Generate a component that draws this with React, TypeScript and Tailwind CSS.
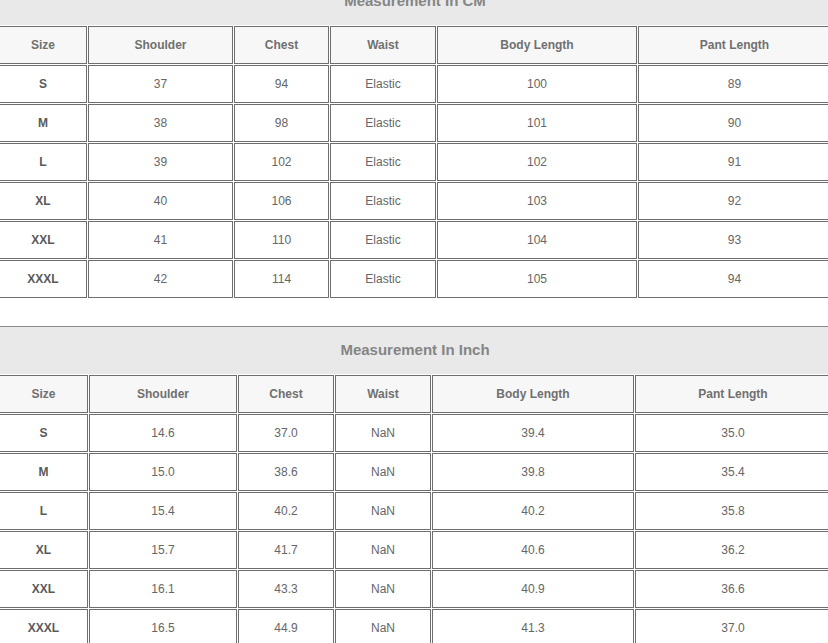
const headers = ["Size", "Shoulder", "Chest", "Waist", "Body Length", "Pant Length"];

const cmRows = [
  ["S", "37", "94", "Elastic", "100", "89"],
  ["M", "38", "98", "Elastic", "101", "90"],
  ["L", "39", "102", "Elastic", "102", "91"],
  ["XL", "40", "106", "Elastic", "103", "92"],
  ["XXL", "41", "110", "Elastic", "104", "93"],
  ["XXXL", "42", "114", "Elastic", "105", "94"],
];

const inchRows = [
  ["S", "14.6", "37.0", "NaN", "39.4", "35.0"],
  ["M", "15.0", "38.6", "NaN", "39.8", "35.4"],
  ["L", "15.4", "40.2", "NaN", "40.2", "35.8"],
  ["XL", "15.7", "41.7", "NaN", "40.6", "36.2"],
  ["XXL", "16.1", "43.3", "NaN", "40.9", "36.6"],
  ["XXXL", "16.5", "44.9", "NaN", "41.3", "37.0"],
];

type TableProps = {
  title: string;
  rows: string[][];
  widths: number[];
  className?: string;
};

const SizeTable = ({ title, rows, widths, className }: TableProps) => {
  return (
    <div className={`w-[834px] -ml-[2px] ${className ?? ""}`}>
      <div className="h-[48px] border-t border-[#8a8a8a] bg-[#e9e9e9] flex items-center justify-center text-[15px] font-bold text-[#858585]">
        {title}
      </div>
      <table className="table-fixed w-[834px] border-separate border-spacing-[1px]">
        <colgroup>
          {widths.map((w, i) => (
            <col key={i} style={{ width: w }} />
          ))}
        </colgroup>
        <thead>
          <tr>
            {headers.map((h) => (
              <th
                key={h}
                className="h-[38px] p-0 border border-[#6e6e6e] bg-[#f7f7f7] text-[12px] font-bold text-[#707070] text-center"
              >
                {h}
              </th>
            ))}
          </tr>
        </thead>
        <tbody>
          {rows.map((row) => (
            <tr key={row[0]}>
              {row.map((cell, i) => (
                <td
                  key={i}
                  className={`h-[38px] p-0 border border-[#6e6e6e] bg-white text-[12px] text-center ${
                    i === 0 ? "font-bold text-[#5a5a5a]" : "text-[#666]"
                  }`}
                >
                  {cell}
                </td>
              ))}
            </tr>
          ))}
        </tbody>
      </table>
    </div>
  );
};

export default function App() {
  return (
    <div className="w-[828px] h-[643px] overflow-hidden bg-white font-['Liberation_Sans',Arial,sans-serif]">
      <div className="-mt-[23px]">
        <SizeTable
          title="Measurement In CM"
          rows={cmRows}
          widths={[88, 145, 95, 106, 200, 193]}
        />
        <SizeTable
          title="Measurement In Inch"
          rows={inchRows}
          widths={[89, 148, 96, 96, 202, 196]}
          className="mt-[27px]"
        />
      </div>
    </div>
  );
}
